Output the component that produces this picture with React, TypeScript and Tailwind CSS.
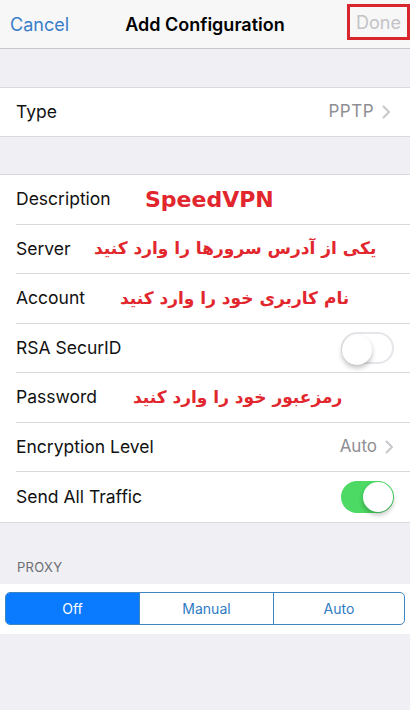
import React from "react";

const font = { fontFamily: "Inter, 'Open Sans', 'Liberation Sans', sans-serif" };
const fa = { fontFamily: "'DejaVu Sans', 'Noto Sans', sans-serif" };

function Chevron() {
  return (
    <svg width="9" height="14" viewBox="0 0 9 14" className="ml-[8px]">
      <path d="M1.5 1.5 L7 7 L1.5 12.5" fill="none" stroke="#c7c7cc" strokeWidth="2" strokeLinecap="round" strokeLinejoin="round" />
    </svg>
  );
}

function Toggle({ on }: { on: boolean }) {
  return (
    <div
      className={`relative w-[53px] h-[32px] rounded-full ${on ? "bg-[#4cd964]" : "bg-white border-[2px] border-[#e5e5ea]"}`}
    >
      <div
        className={`absolute top-[1px] w-[30px] h-[30px] rounded-full bg-white shadow-[0_3px_5px_rgba(0,0,0,0.25)] ${on ? "right-[1px]" : "left-[-1px] top-[-1px]"}`}
      />
    </div>
  );
}

function Row({ label, children, last }: { label: string; children?: React.ReactNode; last?: boolean }) {
  return (
    <div className="pl-[16px]">
      <div className={`h-[49.5px] flex items-center pr-[16px] ${last ? "" : "border-b border-[#d9d9de]"}`}>
        <span className="text-[17.5px] text-[#111] min-w-[128px] shrink-0 whitespace-nowrap">{label}</span>
        <div className="flex-1 flex items-center min-w-0">{children}</div>
      </div>
    </div>
  );
}

export default function App() {
  return (
    <div className="w-[410px] h-[710px] bg-[#efeff4] overflow-hidden" style={font}>
      {/* Nav bar */}
      <div className="h-[49px] bg-[#f7f7f8] border-b border-[#c8c8cc] grid grid-cols-[1fr_auto_1fr] items-center pl-[10px]">
        <span className="text-[18px] text-[#3a7ec8] justify-self-start">Cancel</span>
        <span className="text-[18px] font-semibold text-black mr-[10px]">Add Configuration</span>
        <div className="justify-self-end w-[63px] h-[36px] border-[3px] border-[#d7262e] flex items-center justify-center mt-[-4px]">
          <span className="text-[18px] text-[#c3c3c6]">Done</span>
        </div>
      </div>

      <div className="h-[38px]" />

      {/* Type */}
      <div className="bg-white border-y border-[#d9d9de]">
        <div className="h-[48px] flex items-center pl-[16px] pr-[19px]">
          <span className="text-[17.5px] text-[#111] flex-1">Type</span>
          <span className="text-[17px] text-[#8e8e93] tracking-[0.5px]">PPTP</span>
          <Chevron />
        </div>
      </div>

      <div className="h-[37px]" />

      {/* Main group */}
      <div className="bg-white border-y border-[#d9d9de]">
        <Row label="Description">
          <span className="text-[22px] font-bold text-[#e2262d] ml-[1px] mt-[1px]" style={fa}>SpeedVPN</span>
        </Row>
        <Row label="Server">
          <span dir="rtl" className="text-[17px] font-bold text-[#e2262d] ml-[-50px]" style={fa}>یکی از آدرس سرورها را وارد کنید</span>
        </Row>
        <Row label="Account">
          <span dir="rtl" className="text-[17px] font-bold text-[#e2262d] ml-[-24px]" style={fa}>نام کاربری خود را وارد کنید</span>
        </Row>
        <Row label="RSA SecurID">
          <div className="flex-1" />
          <Toggle on={false} />
        </Row>
        <Row label="Password">
          <span dir="rtl" className="text-[17px] font-bold text-[#e2262d] ml-[-11px]" style={fa}>رمزعبور خود را وارد کنید</span>
        </Row>
        <Row label="Encryption Level">
          <div className="flex-1" />
          <span className="text-[17px] text-[#8e8e93]">Auto</span>
          <Chevron />
        </Row>
        <Row label="Send All Traffic" last>
          <div className="flex-1" />
          <Toggle on={true} />
        </Row>
      </div>

      {/* Proxy */}
      <div className="h-[61px] flex items-end pl-[17px] pb-[6px]">
        <span className="text-[13px] text-[#6d6d72] tracking-[0.3px]">PROXY</span>
      </div>
      <div className="bg-white h-[50px] flex items-center px-[5px]">
        <div className="flex-1 h-[33px] flex border border-[#3d86c2] rounded-[5px] overflow-hidden">
          <div className="w-[133px] bg-[#0a7aff] flex items-center justify-center text-[14px] text-white">Off</div>
          <div className="w-[134px] border-l border-[#3d86c2] flex items-center justify-center text-[14px] text-[#2f7bc4]">Manual</div>
          <div className="flex-1 border-l border-[#3d86c2] flex items-center justify-center text-[14px] text-[#2f7bc4]">Auto</div>
        </div>
      </div>
    </div>
  );
}
